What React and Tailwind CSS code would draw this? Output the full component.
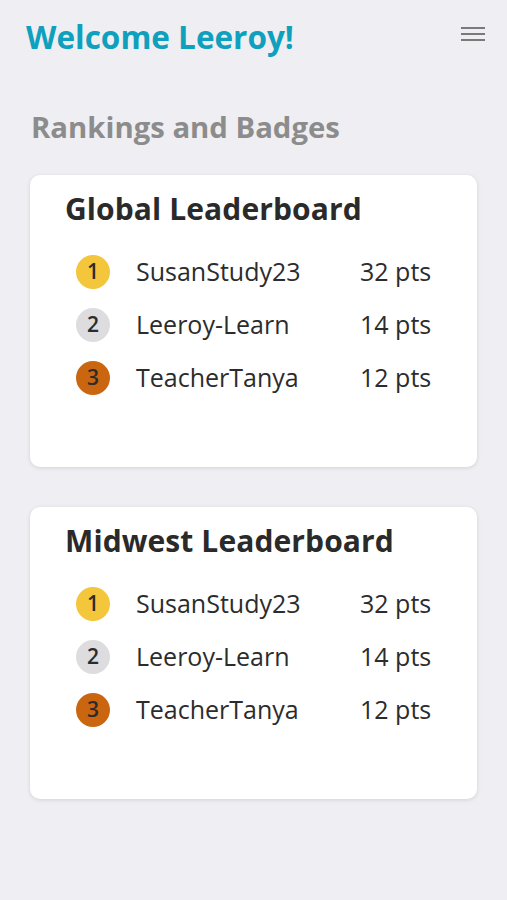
import React from 'react';

const rows = [
    { rank: 1, name: 'SusanStudy23', pts: 32, color: 'bg-[#f3c63b]' },
    { rank: 2, name: 'Leeroy-Learn', pts: 14, color: 'bg-[#dddddf]' },
    { rank: 3, name: 'TeacherTanya', pts: 12, color: 'bg-[#c9660f]' },
];

const Leaderboard = ({ title }) => (
    <div className="bg-white rounded-[10px] shadow-[0_1px_4px_rgba(0,0,0,0.12)] h-[292px] pl-[35px] pt-[16px]">
        <h2 className="text-[30px] font-bold text-[#2a2a2a] leading-[36px] tracking-[0.1px]">{title}</h2>
        <div className="mt-[28px] flex flex-col gap-[19px]">
            {rows.map((r) => (
                <div key={r.rank} className="flex items-center h-[34px] text-[25px] text-[#2c2c2c]">
                    <div className={`ml-[11px] w-[34px] h-[34px] rounded-full flex items-center justify-center text-[21px] font-semibold text-[#2c2c2c] ${r.color}`}>
                        {r.rank}
                    </div>
                    <span className="ml-[26px] w-[224px]">{r.name}</span>
                    <span>{r.pts} pts</span>
                </div>
            ))}
        </div>
    </div>
);

const App = () => {
    return (
        <div className="min-h-[900px] bg-[#efeff3] font-['Open_Sans',sans-serif]">
            <div className="flex items-center justify-between pl-[26px] pr-[22px] pt-[16px] h-[58px]">
                <h1 className="text-[31.5px] font-bold text-[#0fa0bd] leading-[38px]">Welcome Leeroy!</h1>
                <svg width="24" height="16" viewBox="0 0 24 16" className="mt-[-6px]">
                    <rect x="0" y="1" width="24" height="2" fill="#7a7a7a" />
                    <rect x="0" y="7" width="24" height="2" fill="#7a7a7a" />
                    <rect x="0" y="13" width="24" height="2" fill="#7a7a7a" />
                </svg>
            </div>

            <h2 className="pl-[31px] mt-[51px] text-[29.3px] font-bold text-[#8c8c8c] leading-[36px]">Rankings and Badges</h2>

            <div className="px-[30px] mt-[30px] flex flex-col gap-[40px]">
                <Leaderboard title="Global Leaderboard" />
                <Leaderboard title="Midwest Leaderboard" />
            </div>
        </div>
    );
};

export default App;
